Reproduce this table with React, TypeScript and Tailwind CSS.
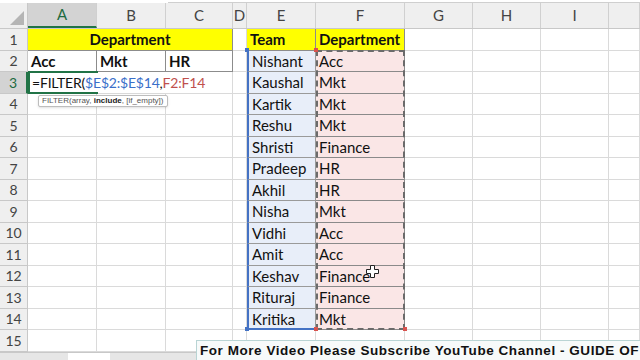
import React from "react";

const cols = ["A", "B", "C", "D", "E", "F", "G", "H", "I", ""];

const team = [
  ["Nishant", "Acc"],
  ["Kaushal", "Mkt"],
  ["Kartik", "Mkt"],
  ["Reshu", "Mkt"],
  ["Shristi", "Finance"],
  ["Pradeep", "HR"],
  ["Akhil", "HR"],
  ["Nisha", "Mkt"],
  ["Vidhi", "Acc"],
  ["Amit", "Acc"],
  ["Keshav", "Finance"],
  ["Rituraj", "Finance"],
  ["Kritika", "Mkt"],
];

const grid = "grid grid-cols-[28px_69px_69px_67px_14px_69px_89px_68px_68px_68px_1fr]";
const cell = "h-[21.5px] border-r border-b border-[#dadada]";
const font = { fontFamily: "Lato, 'Noto Sans', sans-serif" };

function RowHead({ n, active }: { n: number; active?: boolean }) {
  return (
    <div
      className={`h-[21.5px] flex items-center justify-center text-[14px] border-r border-b border-[#c8c8c8] ${
        active ? "bg-[#d3d3d3] text-[#1e6b41] border-r-2 border-r-[#217346]" : "bg-[#efefef] text-[#444]"
      }`}
    >
      {n}
    </div>
  );
}

function Empty({ n }: { n: number }) {
  return (
    <>
      {Array.from({ length: n }).map((_, i) => (
        <div key={i} className={cell} />
      ))}
    </>
  );
}

export default function App() {
  return (
    <div className="relative w-[640px] h-[360px] overflow-hidden bg-white text-[#111]" style={font}>
      {/* barra superior */}
      <div className="h-[3px] bg-white border-b border-[#cfcfcf] ml-[168px]" />

      {/* cabecera de columnas */}
      <div className={`${grid} h-[26px] bg-[#efefef] border-b border-[#c8c8c8]`}>
        <div className="relative border-r border-[#c8c8c8]">
          <div className="absolute right-[3px] bottom-[3px] w-0 h-0 border-l-[14px] border-l-transparent border-b-[14px] border-b-[#b5b5b5]" />
        </div>
        {cols.map((c, i) => (
          <div
            key={i}
            className={`flex items-center justify-center text-[15px] border-r border-[#d0d0d0] ${
              c === "A" ? "bg-[#d3d3d3] text-[#1e6b41] border-b-2 border-b-[#217346]" : "text-[#444]"
            }`}
          >
            {c}
          </div>
        ))}
      </div>

      {/* filas */}
      <div className={grid}>
        {/* fila 1 */}
        <RowHead n={1} />
        <div className="col-span-3 h-[21.5px] bg-[#ffff00] border-b border-r border-[#8c8c8c] flex items-center justify-center font-bold text-[15px]">
          Department
        </div>
        <div className={cell} />
        <div className="h-[21.5px] bg-[#ffff00] border-r border-b border-[#8c8c8c] flex items-center px-[3px] font-bold text-[15px]">
          Team
        </div>
        <div className="h-[21.5px] bg-[#ffff00] border-r border-b border-[#8c8c8c] flex items-center px-[3px] font-bold text-[15px]">
          Department
        </div>
        <Empty n={4} />

        {/* fila 2 */}
        <RowHead n={2} />
        {["Acc", "Mkt", "HR"].map((d) => (
          <div key={d} className="h-[21.5px] border-r border-b border-[#8c8c8c] flex items-center px-[3px] font-bold text-[15px]">
            {d}
          </div>
        ))}
        <div className={cell} />
        <TeamCells i={0} />
        <Empty n={4} />

        {/* fila 3: fórmula */}
        <RowHead n={3} active />
        <div className="relative col-span-3 h-[21.5px] border-r border-b border-[#dadada] flex items-center pl-[4px] text-[14px] tracking-[-0.2px] whitespace-nowrap">
          <div className="absolute left-0 top-[-1px] w-[70px] h-[23px] border-l-2 border-t-2 border-b-2 border-[#217346] pointer-events-none" />
          <span>=FILTER(</span>
          <span className="text-[#3a6fc9]">$E$2:$E$14</span>
          <span>,</span>
          <span className="text-[#c0504d]">F2:F14</span>
          <div
            className="absolute left-[10px] top-[23px] z-10 h-[12px] px-[3px] bg-white border border-[#bdbdbd] rounded-[2px] shadow-sm flex items-center text-[8px] tracking-normal text-[#555]"
            style={{ fontFamily: "'Liberation Sans', sans-serif" }}
          >
            FILTER(array, <b className="text-[#222]">&nbsp;include</b>, [if_empty])
          </div>
        </div>
        <div className={cell} />
        <TeamCells i={1} />
        <Empty n={4} />

        {Array.from({ length: 12 }).map((_, k) => {
          const r = k + 4;
          const i = r - 2;
          return (
            <React.Fragment key={r}>
              <RowHead n={r} />
              <Empty n={4} />
              {i < team.length ? <TeamCells i={i} /> : <Empty n={2} />}
              <Empty n={4} />
            </React.Fragment>
          );
        })}
      </div>

      {/* rango F2:F14 punteado */}
      <div className="absolute left-[316px] top-[50px] w-[89px] h-[280px] border-2 border-dashed border-[#6b6b6b] pointer-events-none" />
      <div className="absolute left-[246px] top-[328px] w-[70px] h-[2px] bg-[#4472c4]" />
      <div className="absolute left-[245px] top-[48px] w-[4px] h-[4px] bg-[#4472c4]" />
      <div className="absolute left-[245px] top-[327px] w-[4px] h-[4px] bg-[#4472c4]" />
      <div className="absolute left-[314px] top-[48px] w-[4px] h-[4px] bg-[#d9534f]" />
      <div className="absolute left-[314px] top-[327px] w-[4px] h-[4px] bg-[#d9534f]" />
      <div className="absolute left-[403px] top-[327px] w-[4px] h-[4px] bg-[#d9534f]" />

      {/* cursor */}
      <svg className="absolute left-[366px] top-[265px]" width="13" height="13" viewBox="0 0 13 13">
        <path d="M4.5 0.5h4v4h4v4h-4v4h-4v-4h-4v-4h4z" fill="#fff" stroke="#222" strokeWidth="1" />
      </svg>

      {/* pestañas */}
      <div className="absolute left-0 top-[352px] w-full h-[8px] bg-[#e6e6e6] border-t border-[#c8c8c8]">
        <div className="absolute left-[68px] top-0 w-[42px] h-full bg-white" />
      </div>

      {/* banner */}
      <div
        className="absolute left-[196px] top-[340px] w-[450px] h-[22px] bg-[#f7fafa] border-t border-l border-[#b9d4d4] flex items-center pl-[3px] text-[13.5px] font-black text-[#111] whitespace-nowrap tracking-[0.55px]"
        style={{ fontFamily: "'Liberation Sans', Arial, sans-serif" }}
      >
        For More Video Please Subscribe YouTube Channel - GUIDE OF
      </div>
    </div>
  );
}

function TeamCells({ i }: { i: number }) {
  return (
    <>
      <div className="h-[21.5px] bg-[#e8eef9] border-r border-b border-[#9a9a9a] border-l-2 border-l-[#4472c4] flex items-center px-[3px] text-[15px]">
        {team[i][0]}
      </div>
      <div className="h-[21.5px] bg-[#fae6e6] border-r border-b border-[#8a8a8a] flex items-center px-[3px] text-[15px]">
        {team[i][1]}
      </div>
    </>
  );
}
